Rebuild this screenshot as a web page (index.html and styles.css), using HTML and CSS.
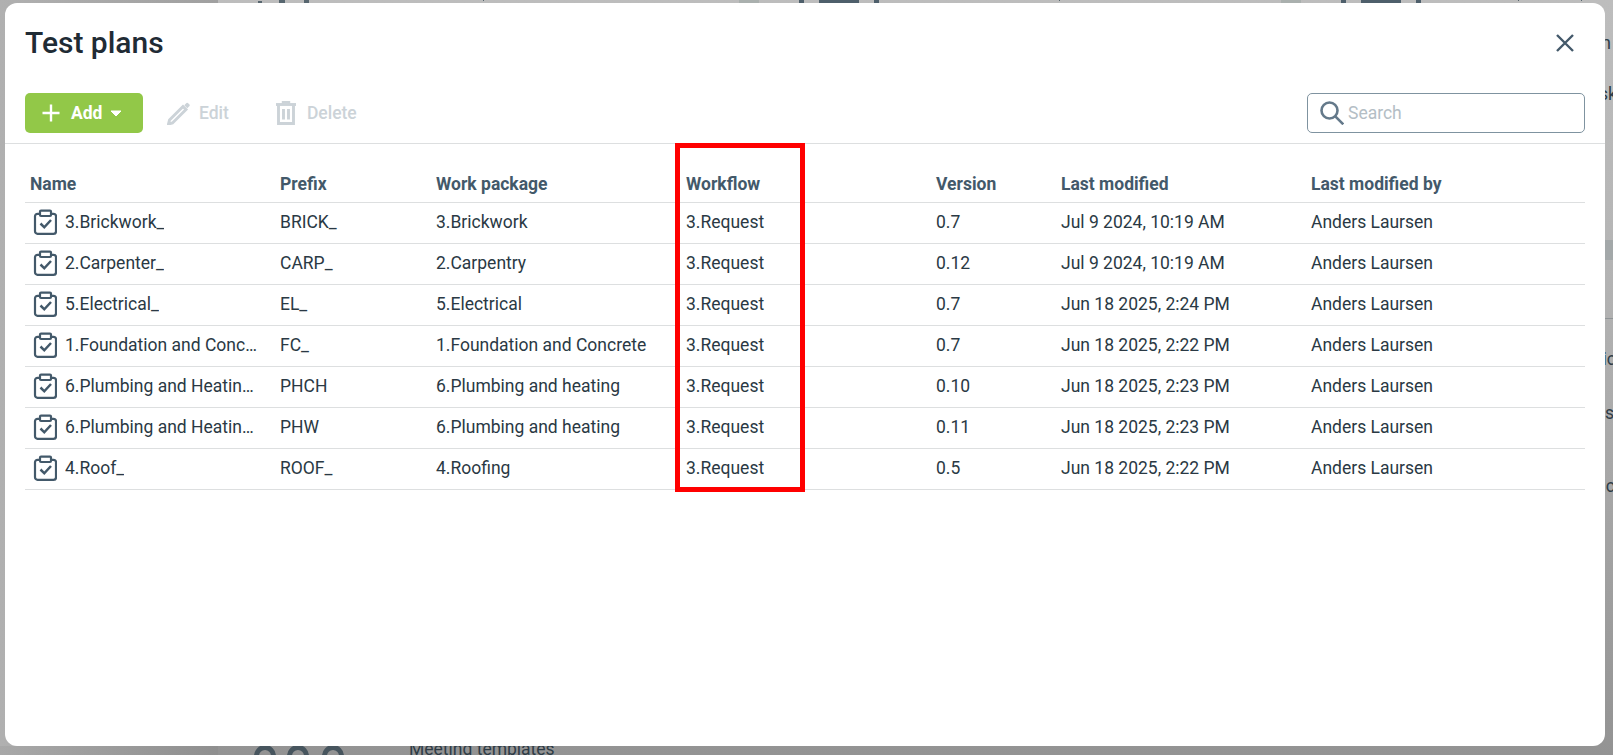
FILE: index.html
```html
<!DOCTYPE html>
<html lang="en">
<head>
<meta charset="utf-8">
<title>Test plans</title>
<link rel="stylesheet" href="styles.css">
</head>
<body>
<div class="backdrop">
  <div class="bg-left"></div>
  <div class="bg-band"></div>
  <div class="bg-rule"></div>
  <i class="block b1"></i><i class="block b2"></i><i class="block b3"></i>
  <i class="block b4"></i><i class="block b5"></i><i class="block b6"></i>
  <i class="pale p1"></i><i class="pale p2"></i>
  <i class="tick t1"></i><i class="tick t2"></i><i class="tick t3"></i><i class="tick t4"></i>
  <i class="tick d1"></i><i class="tick d2"></i><i class="tick d3"></i>
  <i class="ring r1"></i><i class="ring r2"></i><i class="ring r3"></i>
  <span class="bg-text meeting">Meeting templates</span>
  <span class="bg-text side s1">Plan</span>
  <span class="bg-text side s2">Task</span>
  <span class="bg-text side s3">Metric</span>
  <span class="bg-text side s4">Status</span>
  <span class="bg-text side s5">Topic</span>
</div>

<div class="modal">
  <header class="modal-head">
    <h1 class="modal-title">Test plans</h1>
    <button class="close" aria-label="Close">
      <svg width="24" height="24" viewBox="0 0 24 24"><path d="M4 4l16 16M20 4L4 20" class="stroke-slate"/></svg>
    </button>
  </header>

  <div class="toolbar">
    <button class="btn-add">
      <svg width="20" height="20" viewBox="0 0 20 20"><path d="M10 1.500v17M1.500 10h17" class="stroke-white"/></svg>
      <span>Add</span>
      <svg class="caret" width="12" height="7" viewBox="0 0 12 7"><path d="M1 1h10L6 6z" fill="#fff" stroke="#fff" stroke-linejoin="round"/></svg>
    </button>
    <button class="btn-ghost btn-edit">
      <svg width="24" height="24" viewBox="0 0 24 24"><path d="M2.500 19l-1 4 4-1L19 8.500l-3-3z" class="stroke-muted thick"/><path d="M17.300 4.200l2.200-2.200a1 1 0 0 1 1.400 0l1.600 1.600a1 1 0 0 1 0 1.400l-2.200 2.200z" fill="#ccd3d8"/></svg>
      <span>Edit</span>
    </button>
    <button class="btn-ghost btn-delete">
      <svg width="20" height="24" viewBox="0 0 20 24"><path d="M0 3.500h20" class="stroke-muted thick"/><path d="M7 3V1h6v2" class="stroke-muted"/><path d="M2.500 4v18.500h15V4M7.500 8v10.500M12.500 8v10.500" class="stroke-muted thick"/></svg>
      <span>Delete</span>
    </button>
    <label class="search">
      <svg width="24" height="24" viewBox="0 0 24 24"><circle cx="9.500" cy="9.500" r="8" class="stroke-search"/><path d="M15.300 15.300l8 8" class="stroke-search"/></svg>
      <input class="search-input" type="text" placeholder="Search">
    </label>
  </div>

  <div class="table-wrap">
    <table class="plans">
      <colgroup>
        <col class="c-name"><col class="c-prefix"><col class="c-wide"><col class="c-wide"><col class="c-version"><col class="c-wide"><col class="c-by">
      </colgroup>
      <thead>
        <tr><th>Name</th><th>Prefix</th><th>Work package</th><th>Workflow</th><th>Version</th><th>Last modified</th><th>Last modified by</th></tr>
      </thead>
      <tbody>
        <tr><td><div class="name-cell"><svg class="clip" viewBox="0 0 24 26"><use href="#clipboard"/></svg><span class="ellipsis">3.Brickwork_</span></div></td><td>BRICK_</td><td>3.Brickwork</td><td>3.Request</td><td>0.7</td><td>Jul 9 2024, 10:19 AM</td><td>Anders Laursen</td></tr>
        <tr><td><div class="name-cell"><svg class="clip" viewBox="0 0 24 26"><use href="#clipboard"/></svg><span class="ellipsis">2.Carpenter_</span></div></td><td>CARP_</td><td>2.Carpentry</td><td>3.Request</td><td>0.12</td><td>Jul 9 2024, 10:19 AM</td><td>Anders Laursen</td></tr>
        <tr><td><div class="name-cell"><svg class="clip" viewBox="0 0 24 26"><use href="#clipboard"/></svg><span class="ellipsis">5.Electrical_</span></div></td><td>EL_</td><td>5.Electrical</td><td>3.Request</td><td>0.7</td><td>Jun 18 2025, 2:24 PM</td><td>Anders Laursen</td></tr>
        <tr><td><div class="name-cell"><svg class="clip" viewBox="0 0 24 26"><use href="#clipboard"/></svg><span class="ellipsis">1.Foundation and Concrete_</span></div></td><td>FC_</td><td>1.Foundation and Concrete</td><td>3.Request</td><td>0.7</td><td>Jun 18 2025, 2:22 PM</td><td>Anders Laursen</td></tr>
        <tr><td><div class="name-cell"><svg class="clip" viewBox="0 0 24 26"><use href="#clipboard"/></svg><span class="ellipsis">6.Plumbing and Heating_CH</span></div></td><td>PHCH</td><td>6.Plumbing and heating</td><td>3.Request</td><td>0.10</td><td>Jun 18 2025, 2:23 PM</td><td>Anders Laursen</td></tr>
        <tr><td><div class="name-cell"><svg class="clip" viewBox="0 0 24 26"><use href="#clipboard"/></svg><span class="ellipsis">6.Plumbing and Heating_W</span></div></td><td>PHW</td><td>6.Plumbing and heating</td><td>3.Request</td><td>0.11</td><td>Jun 18 2025, 2:23 PM</td><td>Anders Laursen</td></tr>
        <tr><td><div class="name-cell"><svg class="clip" viewBox="0 0 24 26"><use href="#clipboard"/></svg><span class="ellipsis">4.Roof_</span></div></td><td>ROOF_</td><td>4.Roofing</td><td>3.Request</td><td>0.5</td><td>Jun 18 2025, 2:22 PM</td><td>Anders Laursen</td></tr>
      </tbody>
    </table>
  </div>
</div>

<div class="highlight"></div>

<svg class="defs" width="0" height="0" aria-hidden="true">
  <symbol id="clipboard" viewBox="0 0 24 26">
    <rect x="2" y="4.800" width="21" height="20" rx="2.500" fill="none" stroke="#43596a" stroke-width="2.200"/>
    <rect x="7" y="1.600" width="11" height="5.400" rx="1" fill="#fff" stroke="#43596a" stroke-width="2.200"/>
    <path d="M7.500 14.500l3.800 3.800 6.700-7.300" fill="none" stroke="#43596a" stroke-width="2.500"/>
  </symbol>
</svg>
</body>
</html>
```

FILE: styles.css
```css
* { box-sizing: border-box; }

html, body {
  margin: 0;
  height: 755px;
  overflow: hidden;
}

body {
  position: relative;
  font-family: Roboto, "Liberation Sans", sans-serif;
  font-size: 17.5px;
  color: #2a3944;
  background: #a5a5a5;
}

/* dimmed page behind the dialog */
.backdrop {
  position: absolute;
  inset: 0;
  overflow: hidden;
  background: linear-gradient(to bottom, #bdbdbd 0, #b6b6b6 230px, #a6a6a6 500px, #939393 755px);
}
.bg-left {
  position: absolute;
  left: 0;
  top: 0;
  bottom: 0;
  width: 218px;
  background: linear-gradient(to right, #b0b0b0, #a6a6a6 60%, #a0a0a0);
}
.bg-left::after {
  content: "";
  position: absolute;
  left: 0;
  right: 0;
  bottom: 0;
  height: 9px;
  background: linear-gradient(to right, #a8a8a8, #8f8f8f);
}
.bg-band {
  position: absolute;
  left: 1600px;
  right: 0;
  top: 240px;
  height: 20px;
  background: #a3a8a9;
}
.bg-rule {
  position: absolute;
  left: 1600px;
  right: 0;
  top: 318px;
  height: 1px;
  background: #8f9496;
}
.block, .pale, .tick { position: absolute; top: 0; height: 3px; }
.block { background: #4e5f6b; }
.b1 { left: 799px; width: 5px; }
.b2 { left: 819px; width: 40px; }
.b3 { left: 874px; width: 5px; }
.b4 { left: 1341px; width: 5px; }
.b5 { left: 1361px; width: 40px; }
.b6 { left: 1416px; width: 5px; }
.pale { background: #aab0ae; width: 20px; }
.p1 { left: 739px; }
.p2 { left: 1281px; }
.tick { width: 1px; height: 1px; background: #57666f; }
.t1 { left: 483px; }
.t2 { left: 1059px; }
.t3 { left: 1518px; }
.t4 { left: 1581px; }
.d1 { left: 258px; width: 4px; height: 2px; top: 1px; }
.d2 { left: 279px; width: 6px; height: 3px; }
.d3 { left: 304px; width: 5px; height: 3px; }

.ring {
  position: absolute;
  top: 745px;
  width: 22px;
  height: 22px;
  border: 5px solid #47555e;
  border-radius: 50%;
}
.r1 { left: 254px; }
.r2 { left: 287px; }
.r3 { left: 322px; }

.bg-text {
  position: absolute;
  white-space: nowrap;
  color: #2e3c46;
}
.meeting { left: 409px; top: 739px; }
.side { width: 60px; text-align: right; line-height: 20px; }
.s1 { top: 33px; right: 2px; }
.s2 { top: 84px; right: -4px; }
.s3 { top: 349px; right: -3px; }
.s4 { top: 403px; right: -1px; }
.s5 { top: 476px; right: -2px; }

/* dialog */
.modal {
  position: absolute;
  left: 5px;
  top: 3px;
  width: 1600px;
  height: 743px;
  background: #fff;
  border-radius: 12px;
  display: flex;
  flex-direction: column;
}
.modal-head {
  height: 90px;
  padding: 22px 28px 0 20px;
  display: flex;
  align-items: flex-start;
  justify-content: space-between;
}
.modal-title {
  margin: 0;
  font-size: 30px;
  line-height: 36px;
  font-weight: 500;
  color: #1f2b35;
}
.close {
  width: 24px;
  height: 24px;
  margin-top: 6px;
  padding: 0;
  border: 0;
  background: none;
  display: block;
}
.stroke-slate { fill: none; stroke: #43596a; stroke-width: 2.400; }
.stroke-white { fill: none; stroke: #fff; stroke-width: 2.400; }
.stroke-muted { fill: none; stroke: #ccd3d8; stroke-width: 2.400; }
.stroke-muted.thick { stroke-width: 2.900; }
.stroke-search { fill: none; stroke: #64798a; stroke-width: 2.600; }

.toolbar {
  height: 51px;
  padding: 0 20px 10px;
  display: flex;
  align-items: stretch;
  border-bottom: 1px solid #dddfe0;
}
button { font-family: inherit; font-size: 17.5px; }
.btn-add {
  width: 118px;
  padding: 0 0 0 16px;
  border: 0;
  border-radius: 5px;
  background: #92c848;
  color: #fff;
  font-weight: 700;
  display: flex;
  align-items: center;
}
.btn-add span { margin-left: 10px; }
.btn-add .caret { margin-left: 8px; margin-top: 1px; }
.btn-ghost {
  padding: 0;
  border: 0;
  background: none;
  color: #ccd3d8;
  font-weight: 500;
  display: flex;
  align-items: center;
}
.btn-edit { margin-left: 24px; gap: 8px; }
.btn-delete { margin-left: 47px; gap: 11px; }

.search {
  margin-left: auto;
  width: 278px;
  padding: 0 10px 0 12px;
  border: 1px solid #7f93a0;
  border-radius: 5px;
  display: flex;
  align-items: center;
  gap: 4px;
}
.search-input {
  flex: 1;
  min-width: 0;
  border: 0;
  outline: 0;
  padding: 0;
  font-family: inherit;
  font-size: 17.5px;
  color: #2a3944;
}
.search-input::placeholder { color: #b4bec5; opacity: 1; }

.table-wrap { padding: 16px 20px 0; }
.plans {
  width: 1560px;
  table-layout: fixed;
  border-collapse: collapse;
}
.c-name { width: 250px; }
.c-prefix { width: 156px; }
.c-wide { width: 250px; }
.c-version { width: 125px; }
.c-by { width: 279px; }
.plans th {
  height: 42px;
  padding: 6px 5px 0;
  text-align: left;
  font-weight: 700;
  color: #43596a;
  border-bottom: 1px solid #dddfe0;
}
.plans td {
  height: 41px;
  padding: 0 5px 2px;
  border-bottom: 1px solid #dddfe0;
  white-space: nowrap;
  overflow: hidden;
  color: #2a3944;
}
.name-cell { display: flex; align-items: center; gap: 8px; padding: 0 11px 0 3px; }
.clip { width: 24px; height: 26px; flex: none; }
.ellipsis { overflow: hidden; text-overflow: ellipsis; white-space: nowrap; min-width: 0; }
.defs { position: absolute; }

/* annotation drawn on top of the screenshot */
.highlight {
  position: absolute;
  left: 675px;
  top: 143px;
  width: 130px;
  height: 349px;
  border: 5px solid #ff0000;
}
```
